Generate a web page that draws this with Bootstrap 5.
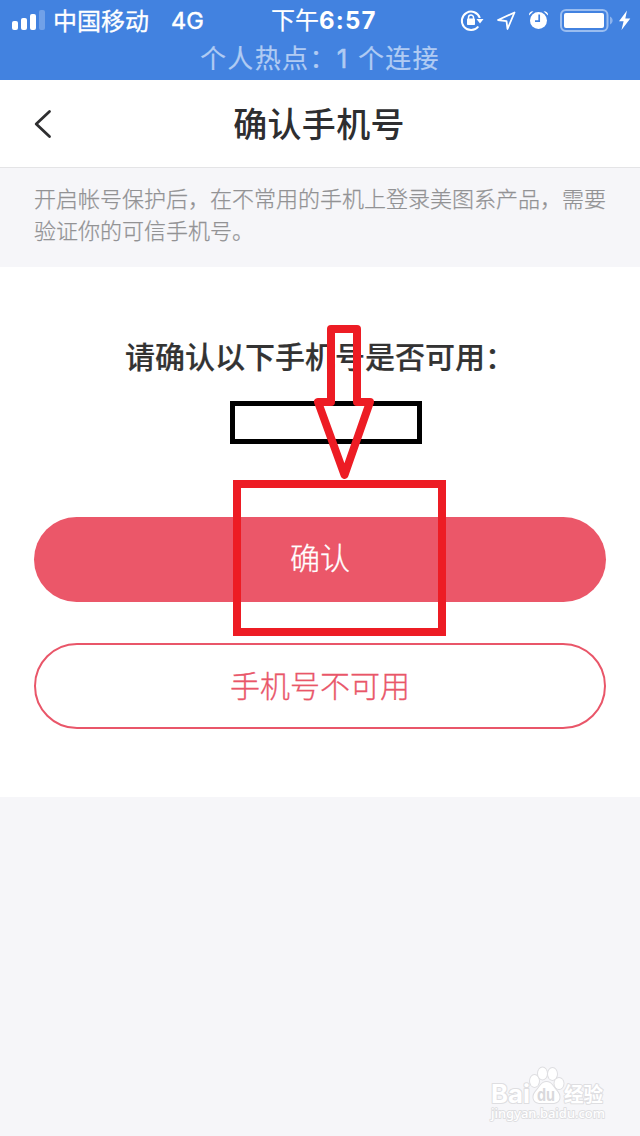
<!DOCTYPE html>
<html lang="zh-CN">
<head>
<meta charset="utf-8">
<meta name="viewport" content="width=device-width, initial-scale=1">
<title>确认手机号</title>
<link href="https://cdn.jsdelivr.net/npm/bootstrap@5.3.0/dist/css/bootstrap.min.css" rel="stylesheet">
<style>
body{font-family:"Noto Sans CJK SC",sans-serif;background:#f6f6f9;color:#2e2e30;width:640px;height:1136px;overflow:hidden}
.latin{font-family:Inter,"Noto Sans CJK SC",sans-serif}
.statusbar{height:80px;background:#4282e0;color:#fff}
.status-row{height:40px;display:grid;grid-template-columns:271px 1fr 180px}
.carrier{font-size:24px;line-height:39px;font-weight:400;-webkit-text-stroke:.3px #fff}
.network{margin-left:22px;line-height:41px;font-size:23.5px;-webkit-text-stroke:.5px #fff}
.clock{font-size:24px;line-height:38px;-webkit-text-stroke:.2px #fff}
.clock b{font-weight:700;letter-spacing:1.2px;-webkit-text-stroke:0}
.hotspot{height:40px;line-height:34px;font-size:26px;letter-spacing:1.35px;color:#b0cbf3;padding-left:200px;-webkit-text-stroke:.2px #b0cbf3}
.hotspot .latin{margin-right:2px;-webkit-text-stroke:.5px #b0cbf3}
.topbar{height:88px;border-bottom:1px solid #e4e4e6;display:grid;grid-template-columns:80px 1fr 80px}
.topbar h1{font-size:34px;line-height:50px;font-weight:500;letter-spacing:.3px;padding:0 2px 2px 0}
.notice{height:99px;padding:13px 34px 0;font-size:22px;line-height:32px;color:#929294;font-weight:300;-webkit-text-stroke:.25px #929294}
.panel{height:530px;padding:65px 34px 0}
.ask{font-size:30px;line-height:46px;font-weight:500;color:#333;-webkit-text-stroke:.2px #333}
.number-box{width:192px;height:43px;border:5px solid #000;margin:23px 0 0 196px}
.pill{height:86px;border-radius:43px;font-size:30px;font-weight:300;line-height:40px}
.pill-main{height:85px;margin-top:73px;background:#eb5769;color:#fff;padding:0 0 7px;-webkit-text-stroke:.3px #fff}
.pill-alt{margin-top:41px;border:2px solid #e95669;color:#e95669;background:#fff;padding:0 0 5px;-webkit-text-stroke:.3px #e95669}
.callout{left:0;top:0;pointer-events:none}
</style>
</head>
<body class="position-relative">
<header class="statusbar">
  <div class="status-row">
    <div class="d-flex carrier">
      <svg width="53" height="40"><g fill="#fff"><rect x="12" y="21" width="6" height="9" rx="2"/><rect x="21" y="18" width="6" height="12" rx="2"/><rect x="30" y="14" width="6" height="16" rx="2"/><rect x="39" y="10" width="6" height="20" rx="2" opacity=".25"/></g></svg>
      <span>中国移动</span><span class="latin network">4G</span>
    </div>
    <div class="clock text-nowrap">下午<b class="latin">6:57</b></div>
    <svg width="180" height="40" viewBox="460 0 180 40" fill="none" stroke="#fff" stroke-width="2">
      <path d="M478.300 26.500A9.200 9.200 0 1 1 479.800 18"/>
      <path d="M476.500 19h7L480 23.500z" fill="#fff" stroke="none"/>
      <rect x="467" y="18.500" width="8" height="6.500" rx=".8" fill="#fff" stroke="none"/>
      <path d="M468.500 19v-1.500a2.500 2.500 0 0 1 5 0V19" stroke-width="1.500"/>
      <path d="M514.500 12.500L498 20l8.500 1.200L507.500 29z" stroke-width="1.800" stroke-linejoin="round"/>
      <circle cx="538.500" cy="20.500" r="8.500" fill="#fff" stroke="none"/>
      <path d="M539.200 14.500V21.200H535" stroke="#4282e0" stroke-width="1.700"/>
      <path d="M529 15.500q-.5-4 4.500-4.200zM548 15.500q.5-4-4.500-4.200z" fill="#fff" stroke="none"/>
      <rect x="561" y="10" width="46.500" height="21" rx="5" stroke="#9abdf0"/>
      <rect x="564" y="13" width="40" height="15" rx="2" fill="#fff" stroke="none"/>
      <path d="M610 16.500c3.500 1.500 3.500 6.500 0 8z" fill="#8eb4ed" stroke="none"/>
      <path d="M627 10.500L619 21.200h4.600L621.500 30l8.800-11.500h-5z" fill="#fff" stroke="none"/>
    </svg>
  </div>
  <div class="hotspot text-nowrap">个人热点：<span class="latin">1</span> 个连接</div>
</header>
<nav class="topbar bg-white align-items-center">
  <svg width="80" height="87" fill="none" stroke="#2e2e30" stroke-width="2.800" stroke-linecap="round" stroke-linejoin="round"><path d="M49.500 31.500L36.200 44l13.300 12.500"/></svg>
  <h1 class="mb-0 text-center">确认手机号</h1>
</nav>
<p class="notice m-0">开启帐号保护后，在不常用的手机上登录美图系产品，需要验证你的可信手机号。</p>
<main class="panel bg-white">
  <div class="ask text-center text-nowrap">请确认以下手机号是否可用：</div>
  <div class="number-box"></div>
  <button class="btn pill pill-main w-100 d-block border-0">确认</button>
  <button class="btn pill pill-alt w-100 d-block">手机号不可用</button>
</main>
<svg class="callout position-absolute" width="640" height="1136" fill="none" stroke="#ed1c24" stroke-width="8">
  <path d="M331 329H357V402H370L344.500 475L318 402H331Z" stroke-linejoin="round"/>
  <rect x="237" y="484" width="205" height="148"/>
  <g fill="#fff" stroke="#dedee1" stroke-width="2" paint-order="stroke" stroke-linejoin="round">
    <ellipse cx="534.500" cy="1081" rx="4.500" ry="6"/><ellipse cx="542.500" cy="1073.500" rx="4.500" ry="6"/><ellipse cx="552.500" cy="1074" rx="4.500" ry="6"/><ellipse cx="559" cy="1083.500" rx="4.500" ry="5.500"/>
    <path d="M546.500 1082c5 0 6 4 9.500 8 5 5 5 12-2 13h-15c-7-1-7-8-2-13 3.500-4 4.500-8 9.500-8z"/>
    <text x="491" y="1102.500" font-family="Inter" font-size="25" font-weight="700" textLength="39" lengthAdjust="spacingAndGlyphs">Bai</text>
    <text x="564" y="1102" font-family="Noto Sans CJK SC" font-size="20" font-weight="700" textLength="39" lengthAdjust="spacingAndGlyphs">经验</text>
    <text x="491" y="1117.500" font-family="Noto Sans" font-size="13" font-weight="500" textLength="114" lengthAdjust="spacingAndGlyphs" stroke="#dedee1" stroke-width="1.800">jingyan.baidu.com</text>
    <text x="537" y="1101" font-family="Inter" font-size="17" font-weight="700" fill="#d9d9dc" stroke="none" textLength="18" lengthAdjust="spacingAndGlyphs">du</text>
  </g>
</svg>
<script src="https://cdn.jsdelivr.net/npm/bootstrap@5.3.0/dist/js/bootstrap.bundle.min.js"></script>
</body>
</html>
